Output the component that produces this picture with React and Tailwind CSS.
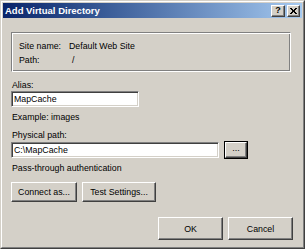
const btn =
  "flex items-center justify-center bg-[#d4d0c8] border border-t-white border-l-white border-r-[#404040] border-b-[#404040] shadow-[inset_-1px_-1px_#808080] text-black";

const field =
  "bg-white border border-t-[#808080] border-l-[#808080] border-r-white border-b-white shadow-[inset_1px_1px_#404040,inset_-1px_-1px_#d4d0c8] px-[2px] flex items-center";

export default function App() {
  return (
    <div className="w-[305px] h-[249px] bg-[#d4d0c8] border border-t-[#d4d0c8] border-l-[#d4d0c8] border-r-[#404040] border-b-[#404040] font-['Liberation_Sans',Arial,sans-serif] text-black">
      <div className="h-full border border-t-white border-l-white border-r-[#808080] border-b-[#808080] p-px flex flex-col">
        {/* title bar */}
        <div className="h-[15px] flex items-center justify-between pl-[2px] pr-[2px] bg-gradient-to-r from-[#0a246a] to-[#a6caf0]">
          <span className="text-white font-bold text-[9.5px] leading-none">Add Virtual Directory</span>
          <div className="flex gap-[2px]">
            <div className={btn + " w-[14px] h-[12px] text-[9px] font-bold leading-none"}>?</div>
            <div className={btn + " w-[13px] h-[12px]"}>
              <svg width="7" height="6" viewBox="0 0 7 6">
                <path d="M0 0L6 6M1 0L7 6M6 0L0 6M7 0L1 6" stroke="#000" strokeWidth="1" />
              </svg>
            </div>
          </div>
        </div>

        {/* body */}
        <div className="flex-1 flex flex-col pl-[8px] pr-[11px] text-[8.8px] leading-[12px]">
          <div className="mt-[14px] h-[40px] border border-t-[#808080] border-l-[#808080] border-r-white border-b-white shadow-[inset_1px_1px_white,inset_-1px_-1px_#808080] pt-[6px] pl-[7px]">
            <div className="flex h-[14px] items-center">
              <span className="w-[50px]">Site name:</span>
              <span>Default Web Site</span>
            </div>
            <div className="flex h-[14px] items-center">
              <span className="w-[50px]">Path:</span>
              <span className="pl-[3px]">/</span>
            </div>
          </div>

          <div className="mt-[7px] pl-[1px]">Alias:</div>
          <div className={field + " w-[128px] h-[16px]"}>MapCache</div>
          <div className="mt-[4px] pl-[1px]">Example: images</div>

          <div className="mt-[6px] pl-[1px]">Physical path:</div>
          <div className="flex items-center gap-[5px] h-[18px]">
            <div className={field + " w-[208px] h-[16px]"}>C:\MapCache</div>
            <div className="w-[24px] h-[18px] border border-black">
              <div className={btn + " w-full h-full text-[9px] leading-none pb-[3px]"}>...</div>
            </div>
          </div>
          <div className="mt-[3px] pl-[1px]">Pass-through authentication</div>

          <div className="mt-[8px] flex gap-[5px]">
            <div className={btn + " w-[66px] h-[20px]"}>Connect as...</div>
            <div className={btn + " w-[74px] h-[20px]"}>Test Settings...</div>
          </div>

          <div className="mt-[15px] flex justify-end gap-[5px]">
            <div className={btn + " w-[65px] h-[23px]"}>OK</div>
            <div className={btn + " w-[65px] h-[23px] mr-[-2px]"}>Cancel</div>
          </div>
        </div>
      </div>
    </div>
  );
}
